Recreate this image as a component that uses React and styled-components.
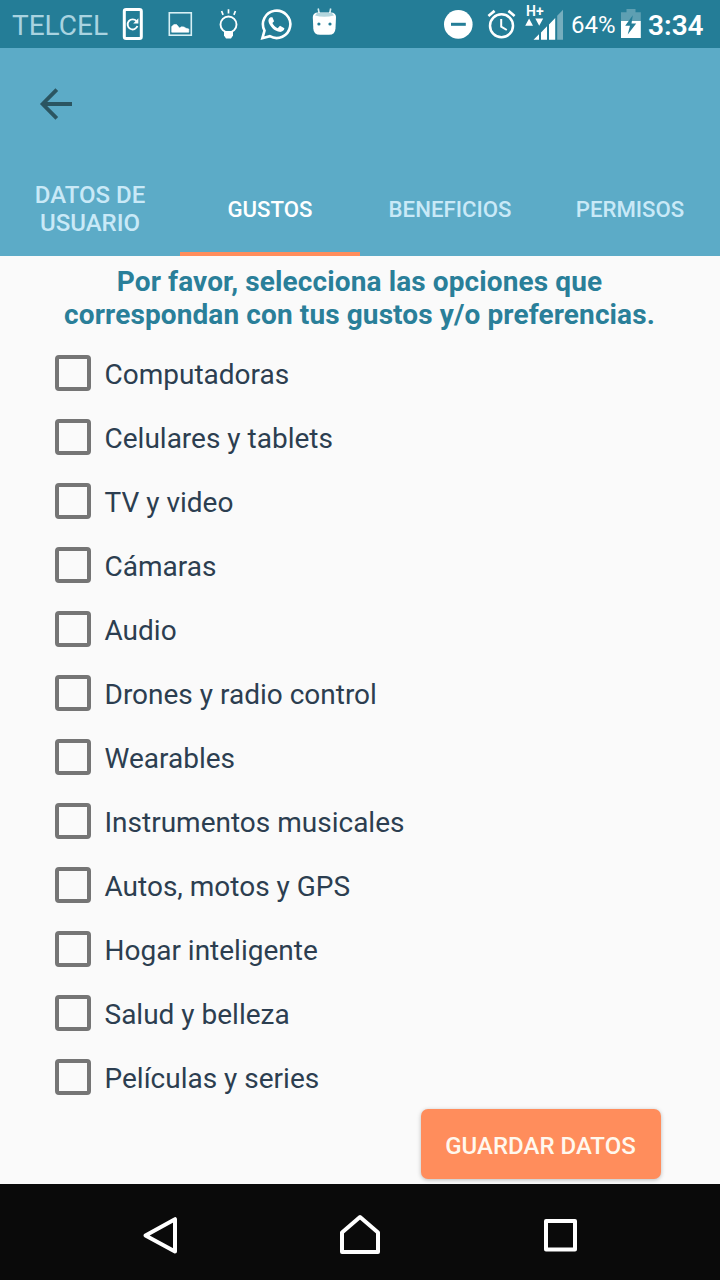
import React from "react";
import styled, { createGlobalStyle } from "styled-components";

const GlobalStyle = createGlobalStyle`
  *, *::before, *::after { box-sizing: border-box; }
  body { margin: 0; background: #fafafa; font-family: Roboto, "Noto Sans", sans-serif; }
`;

const Screen = styled.div`
  width: 720px;
  height: 1280px;
  display: flex;
  flex-direction: column;
  background: #fafafa;
  overflow: hidden;
`;

const StatusBar = styled.header`
  flex: none;
  height: 48px;
  display: flex;
  justify-content: space-between;
  padding: 0 15px 0 12px;
  background: #247d97;
  color: #fff;
`;

const StatusGroup = styled.div`
  display: flex;
  align-items: center;
  white-space: nowrap;
`;

const StatusIcon = styled.svg`
  flex: none;
  display: block;
  height: 48px;
  width: ${({ $width }) => $width}px;
  margin-left: ${({ $gap }) => $gap}px;
  overflow: visible;
`;

const Carrier = styled.span`
  width: 96px;
  padding-top: 3px;
  font-size: 28px;
  line-height: 32px;
  color: #a9d3e0;
`;

const Battery = styled.span`
  width: 44px;
  margin-left: 8px;
  padding-top: 2px;
  font-size: 24px;
  line-height: 32px;
`;

const Clock = styled.time`
  width: 57px;
  margin-left: 7px;
  padding-top: 3px;
  font-size: 28px;
  font-weight: 600;
  line-height: 32px;
`;

const AppBar = styled.div`
  flex: none;
  height: 208px;
  display: flex;
  flex-direction: column;
  background: #5cabc7;
`;

const Toolbar = styled.div`
  height: 112px;
  display: flex;
  align-items: center;
  padding-left: 32px;
`;

const BackButton = styled.button`
  width: 48px;
  height: 48px;
  padding: 0;
  border: 0;
  background: none;
  svg { display: block; }
`;

const Tabs = styled.nav`
  flex: 1;
  display: grid;
  grid-template-columns: repeat(4, 180px);
`;

const Tab = styled.button`
  display: flex;
  align-items: center;
  justify-content: center;
  padding: 1px 24px 0;
  border: 0;
  background: none;
  box-shadow: ${({ $active }) => ($active ? "inset 0 -4px #ff8d5c" : "none")};
  color: ${({ $active }) => ($active ? "#fff" : "#c9e9f7")};
  font-family: inherit;
  font-size: ${({ $small }) => ($small ? 22.2 : 24)}px;
  font-weight: 500;
  line-height: 28px;
  text-align: center;
`;

const Content = styled.main`
  flex: 1;
  display: flex;
  flex-direction: column;
  padding: 9px 59px 0 49px;
`;

const Heading = styled.h1`
  align-self: center;
  margin: 0 -9px 10px 0;
  font-size: 28px;
  line-height: 33px;
  letter-spacing: 0.11px;
  font-weight: 700;
  text-align: center;
  color: #2a7f99;
  white-space: nowrap;
`;

const Options = styled.div`
  display: flex;
  flex-direction: column;
`;

const Option = styled.label`
  height: 64px;
  display: flex;
  align-items: center;
  gap: 13.5px;
  padding-left: 6px;
  color: #2c3e50;
  font-size: 28px;
  line-height: 34px;
`;

const Checkbox = styled.input`
  appearance: none;
  flex: none;
  width: 36px;
  height: 36px;
  margin: 0;
  border: 4px solid #757575;
  border-radius: 4px;
`;

const OptionText = styled.span`
  padding-top: 3px;
`;

const SaveButton = styled.button`
  align-self: flex-end;
  width: 240px;
  height: 70px;
  padding: 3px 1px 0 0;
  border: 0;
  border-radius: 7px;
  background: #ff8d5c;
  box-shadow: 0 1px 4px rgba(0, 0, 0, 0.25);
  color: #fff8ee;
  font-family: inherit;
  font-size: 24px;
  font-weight: 500;
`;

const NavBar = styled.footer`
  flex: none;
  height: 96px;
  display: grid;
  grid-template-columns: repeat(3, 200px);
  justify-content: center;
  align-items: center;
  justify-items: center;
  padding-top: 8px;
  background: #0a0a0a;
`;

const NavIcon = styled.svg`
  display: block;
  width: 48px;
  height: 48px;
  fill: none;
  stroke: #fff;
  stroke-width: 4;
  stroke-linejoin: round;
`;

const tabs = [
  { label: "DATOS DE USUARIO" },
  { label: "GUSTOS", active: true, small: true },
  { label: "BENEFICIOS", small: true },
  { label: "PERMISOS", small: true },
];

const options = [
  "Computadoras",
  "Celulares y tablets",
  "TV y video",
  "Cámaras",
  "Audio",
  "Drones y radio control",
  "Wearables",
  "Instrumentos musicales",
  "Autos, motos y GPS",
  "Hogar inteligente",
  "Salud y belleza",
  "Películas y series",
];

const PhoneUpdateIcon = () => (
  <StatusIcon $width={21} $gap={14} viewBox="0 0 21 48">
    <rect x="2.3" y="9.5" width="17" height="29" rx="1.8" fill="none" stroke="#fff" strokeWidth="3" />
    <path d="M14.5 21.2A5 5 0 1 0 15.4 26" fill="none" stroke="#fff" strokeWidth="1.9" />
    <path d="M16.4 18.3V23.6H11.2Z" fill="#fff" />
  </StatusIcon>
);

const PictureIcon = () => (
  <StatusIcon $width={24} $gap={25} viewBox="0 0 24 48">
    <rect x="1.3" y="12.8" width="22" height="22.4" fill="none" stroke="#d6f0f5" strokeWidth="1.6" />
    <path d="M3.7 32.2V26.5L6 24.6H8.6L11.5 28L13.5 26.8L16 27L18 28.3L20.8 29V32.2Z" fill="#fff" stroke="#fff" strokeWidth=".6" strokeLinejoin="round" />
  </StatusIcon>
);

const BulbIcon = () => (
  <StatusIcon $width={20} $gap={26} viewBox="0 0 20 48">
    <circle cx="10.5" cy="24.5" r="8" fill="none" stroke="#fff" strokeWidth="1.9" />
    <path d="M6 31H15V35.5L13 38.6H8L6 35.5Z" fill="#fff" />
    <path d="M3.6 11L5.1 14.9M10.5 9.2V13.6M17.4 11L15.9 14.9" stroke="#fff" strokeWidth="1.7" />
  </StatusIcon>
);

const WhatsAppIcon = () => (
  <StatusIcon $width={31} $gap={22} viewBox="0 0 31 48">
    <path d="M2.4 38.2L4.5 30.7A13.7 13.7 0 1 1 9.8 36.2Z" fill="none" stroke="#fff" strokeWidth="2.6" />
    <path d="M10.6 17.3C8.9 18.2 8 20.2 8.7 22.3C10.2 27 14.6 31 19.1 31.8C21.9 32.3 24.2 30.8 24.4 28.3L20 25.8L17.7 28.2C15.4 27.4 13.2 25.2 12.4 23.1L14.1 21.2L12.4 17.2Z" fill="#fff" />
  </StatusIcon>
);

const RobotIcon = () => (
  <StatusIcon $width={24} $gap={21} viewBox="0 0 24 48">
    <path d="M6.2 8.5L7.4 14.5M18.7 8.5L17.5 14.5" stroke="#d9eef2" strokeWidth="1.6" />
    <path d="M.8 17Q1.1 12.5 6 12.5H19Q23.7 12.5 24 17L23.5 28.5Q23.2 34.8 17 34.8H8Q1.6 34.8 1.3 28.5Z" fill="#fff" />
    <path d="M5 13H20L22 15.5Q12 18 3 15.5Z" fill="#b3d6de" />
    <circle cx="6.9" cy="24" r="1.6" fill="#247d97" />
    <circle cx="18" cy="24" r="1.6" fill="#247d97" />
  </StatusIcon>
);

const DoNotDisturbIcon = () => (
  <StatusIcon $width={29} $gap={0} viewBox="0 0 29 48">
    <circle cx="14.3" cy="24.4" r="14.3" fill="#fff" />
    <rect x="7" y="22.8" width="14.8" height="3" fill="#247d97" />
  </StatusIcon>
);

const AlarmIcon = () => (
  <StatusIcon $width={29} $gap={14} viewBox="0 0 29 48">
    <circle cx="14.5" cy="25.8" r="11.5" fill="none" stroke="#fff" strokeWidth="2.5" />
    <path d="M1.4 16L7.6 10.9M27.6 16L21.4 10.9" stroke="#fff" strokeWidth="2.7" />
    <path d="M14.2 19V26.6L19.8 30" fill="none" stroke="#fff" strokeWidth="2" />
  </StatusIcon>
);

const NetworkType = styled.text`
  font-size: 14px;
  font-weight: 600;
  fill: #fff;
`;

const SignalIcon = () => (
  <StatusIcon $width={38} $gap={9} viewBox="0 0 38 48">
    <NetworkType x="1" y="16">H+</NetworkType>
    <path d="M.2 25.7L4.1 18.5L8 25.7ZM10.3 18.5H18.2L14.2 25.7Z" fill="#fff" />
    <path d="M8.5 39.8L14 34.3V39.8ZM16 32.4L22 26.2V39.8H16ZM24 24.4L30.2 18V39.8H24Z" fill="#fff" />
    <path d="M32.2 15.8L38 9.8V39.8H32.2Z" fill="#76aebe" />
  </StatusIcon>
);

const BatteryIcon = () => (
  <StatusIcon $width={20} $gap={6} viewBox="0 0 20 48">
    <path d="M5.5 9H14.5V12.3H19.8V21H0V12.3H5.5Z" fill="#5e9fb2" />
    <path d="M0 21H19.8V38H0Z" fill="#fff" />
    <path d="M11.8 15.3L4.2 25.8H9L6.7 34.5L15.2 23.6H10.5Z" fill="#247d97" />
  </StatusIcon>
);

export default function App() {
  return (
    <>
      <GlobalStyle />
      <Screen>
        <StatusBar>
          <StatusGroup>
            <Carrier>TELCEL</Carrier>
            <PhoneUpdateIcon />
            <PictureIcon />
            <BulbIcon />
            <WhatsAppIcon />
            <RobotIcon />
          </StatusGroup>
          <StatusGroup>
            <DoNotDisturbIcon />
            <AlarmIcon />
            <SignalIcon />
            <Battery>64%</Battery>
            <BatteryIcon />
            <Clock>3:34</Clock>
          </StatusGroup>
        </StatusBar>
        <AppBar>
          <Toolbar>
            <BackButton aria-label="Atrás">
              <svg width="48" height="48" viewBox="0 0 48 48" fill="none" stroke="#2b5561" strokeWidth="3.8">
                <path d="M40 24H11M24.8 9.6L10.6 24L24.8 38.4" />
              </svg>
            </BackButton>
          </Toolbar>
          <Tabs>
            {tabs.map((tab) => (
              <Tab key={tab.label} $active={tab.active} $small={tab.small}>
                {tab.label}
              </Tab>
            ))}
          </Tabs>
        </AppBar>
        <Content>
          <Heading>
            Por favor, selecciona las opciones que
            <br />
            correspondan con tus gustos y/o preferencias.
          </Heading>
          <Options>
            {options.map((option) => (
              <Option key={option}>
                <Checkbox type="checkbox" />
                <OptionText>{option}</OptionText>
              </Option>
            ))}
          </Options>
          <SaveButton>GUARDAR DATOS</SaveButton>
        </Content>
        <NavBar>
          <NavIcon viewBox="0 0 48 48">
            <path d="M39 7.2V39.6L9.5 23.4Z" />
          </NavIcon>
          <NavIcon viewBox="0 0 48 48">
            <path d="M24 5L42 20.5V40H6V20.5Z" />
          </NavIcon>
          <NavIcon viewBox="0 0 48 48">
            <rect x="10" y="9" width="29" height="28.5" />
          </NavIcon>
        </NavBar>
      </Screen>
    </>
  );
}
